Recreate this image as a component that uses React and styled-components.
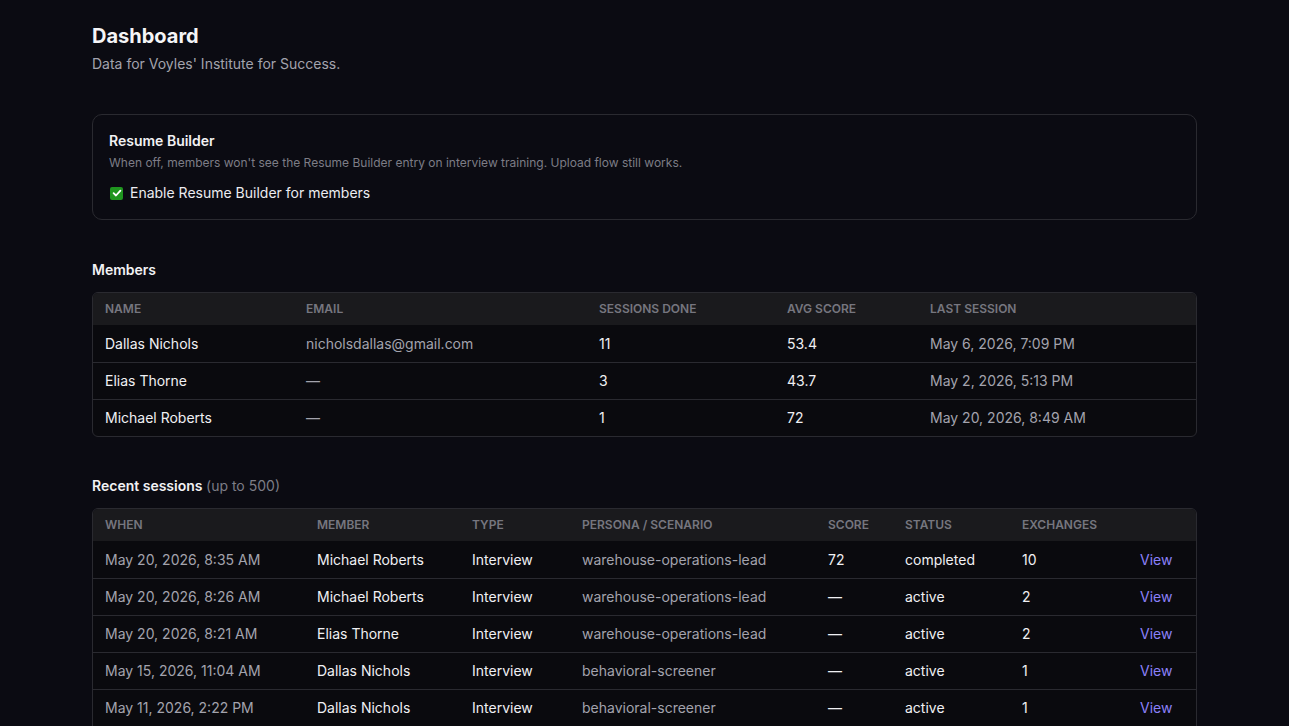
import React from "react";
import styled, { createGlobalStyle } from "styled-components";

const Global = createGlobalStyle`
  html, body { margin: 0; padding: 0; background: #0b0b12; }
  body { font-family: Inter, "Noto Sans", sans-serif; color: #ededf0; -webkit-font-smoothing: antialiased; }
  * { box-sizing: border-box; }
`;

const Page = styled.main`
  max-width: 1105px;
  margin: 0 auto;
  padding: 22px 0 40px;
`;

const Title = styled.h1`
  margin: 0;
  font-size: 20px;
  line-height: 28px;
  font-weight: 700;
  color: #f5f5f7;
`;

const Subtitle = styled.p`
  margin: 4px 0 0;
  font-size: 14px;
  line-height: 20px;
  color: #a3a3ad;
`;

const Card = styled.section`
  margin-top: 40px;
  border: 1px solid #2a2a30;
  border-radius: 10px;
  padding: 16px;
`;

const CardTitle = styled.h3`
  margin: 0;
  font-size: 14px;
  line-height: 20px;
  font-weight: 600;
  color: #f2f2f4;
`;

const CardDesc = styled.p`
  margin: 4px 0 0;
  font-size: 12px;
  line-height: 16px;
  color: #7d7d86;
`;

const CheckRow = styled.label`
  margin-top: 12px;
  display: flex;
  align-items: center;
  gap: 7px;
  font-size: 14px;
  line-height: 20px;
  color: #ececf0;
`;

const Box = styled.span`
  width: 13px;
  height: 13px;
  border-radius: 2px;
  background: #1f951f;
  display: inline-flex;
  align-items: center;
  justify-content: center;
  margin-left: 1px;
`;

const Section = styled.section`
  margin-top: ${(p) => p.$gap || 40}px;
`;

const SectionTitle = styled.h2`
  margin: 0 0 12px;
  font-size: 14px;
  line-height: 20px;
  font-weight: 600;
  color: #f2f2f4;
`;

const Muted = styled.span`
  font-weight: 400;
  color: #7d7d86;
`;

const TableWrap = styled.div`
  border: 1px solid #2a2a30;
  border-radius: 6px;
  overflow: hidden;
  background: #0a0a0e;
`;

const Table = styled.table`
  width: 100%;
  border-collapse: collapse;
  table-layout: fixed;
`;

const Th = styled.th`
  text-align: left;
  background: #1a1a1d;
  height: 32px;
  padding: 0 12px 1px;
  font-size: 12px;
  font-weight: 600;
  text-transform: uppercase;
  color: #76767f;
  width: ${(p) => (p.$w ? `${p.$w}px` : "auto")};
`;

const Tr = styled.tr`
  & + & td { border-top: 1px solid #2a2a30; }
`;

const Td = styled.td`
  height: 37px;
  padding: 0 12px;
  font-size: 14px;
  color: ${(p) => (p.$muted ? "#a3a3ad" : "#f0f0f3")};
  white-space: nowrap;
  overflow: hidden;
`;

const ViewLink = styled.a`
  color: #8b80f9;
  text-decoration: none;
  cursor: pointer;
`;

const Check = () => (
  <svg width="10" height="10" viewBox="0 0 10 10">
    <path d="M1.6 5.2 L4 7.5 L8.4 2.6" fill="none" stroke="#fff" strokeWidth="1.8" strokeLinecap="round" strokeLinejoin="round" />
  </svg>
);

const members = [
  ["Dallas Nichols", "nicholsdallas@gmail.com", "11", "53.4", "May 6, 2026, 7:09 PM"],
  ["Elias Thorne", "—", "3", "43.7", "May 2, 2026, 5:13 PM"],
  ["Michael Roberts", "—", "1", "72", "May 20, 2026, 8:49 AM"],
];

const sessions = [
  ["May 20, 2026, 8:35 AM", "Michael Roberts", "Interview", "warehouse-operations-lead", "72", "completed", "10"],
  ["May 20, 2026, 8:26 AM", "Michael Roberts", "Interview", "warehouse-operations-lead", "—", "active", "2"],
  ["May 20, 2026, 8:21 AM", "Elias Thorne", "Interview", "warehouse-operations-lead", "—", "active", "2"],
  ["May 15, 2026, 11:04 AM", "Dallas Nichols", "Interview", "behavioral-screener", "—", "active", "1"],
  ["May 11, 2026, 2:22 PM", "Dallas Nichols", "Interview", "behavioral-screener", "—", "active", "1"],
  ["May 9, 2026, 4:10 PM", "Dallas Nichols", "Interview", "behavioral-screener", "—", "active", "1"],
];

export default function App() {
  return (
    <>
      <Global />
      <Page>
        <Title>Dashboard</Title>
        <Subtitle>Data for Voyles' Institute for Success.</Subtitle>

        <Card>
          <CardTitle>Resume Builder</CardTitle>
          <CardDesc>When off, members won't see the Resume Builder entry on interview training. Upload flow still works.</CardDesc>
          <CheckRow>
            <Box><Check /></Box>
            Enable Resume Builder for members
          </CheckRow>
        </Card>

        <Section>
          <SectionTitle>Members</SectionTitle>
          <TableWrap>
            <Table>
              <thead>
                <tr>
                  <Th $w={201}>Name</Th>
                  <Th $w={293}>Email</Th>
                  <Th $w={188}>Sessions done</Th>
                  <Th $w={143}>Avg score</Th>
                  <Th>Last session</Th>
                </tr>
              </thead>
              <tbody>
                {members.map((m) => (
                  <Tr key={m[0]}>
                    <Td>{m[0]}</Td>
                    <Td $muted>{m[1]}</Td>
                    <Td>{m[2]}</Td>
                    <Td>{m[3]}</Td>
                    <Td $muted>{m[4]}</Td>
                  </Tr>
                ))}
              </tbody>
            </Table>
          </TableWrap>
        </Section>

        <Section $gap={39}>
          <SectionTitle>
            Recent sessions <Muted>(up to 500)</Muted>
          </SectionTitle>
          <TableWrap>
            <Table>
              <thead>
                <tr>
                  <Th $w={212}>When</Th>
                  <Th $w={155}>Member</Th>
                  <Th $w={110}>Type</Th>
                  <Th $w={246}>Persona / Scenario</Th>
                  <Th $w={77}>Score</Th>
                  <Th $w={117}>Status</Th>
                  <Th $w={118}>Exchanges</Th>
                  <Th></Th>
                </tr>
              </thead>
              <tbody>
                {sessions.map((s, i) => (
                  <Tr key={i}>
                    <Td $muted>{s[0]}</Td>
                    <Td>{s[1]}</Td>
                    <Td>{s[2]}</Td>
                    <Td $muted>{s[3]}</Td>
                    <Td>{s[4]}</Td>
                    <Td>{s[5]}</Td>
                    <Td>{s[6]}</Td>
                    <Td><ViewLink>View</ViewLink></Td>
                  </Tr>
                ))}
              </tbody>
            </Table>
          </TableWrap>
        </Section>
      </Page>
    </>
  );
}
